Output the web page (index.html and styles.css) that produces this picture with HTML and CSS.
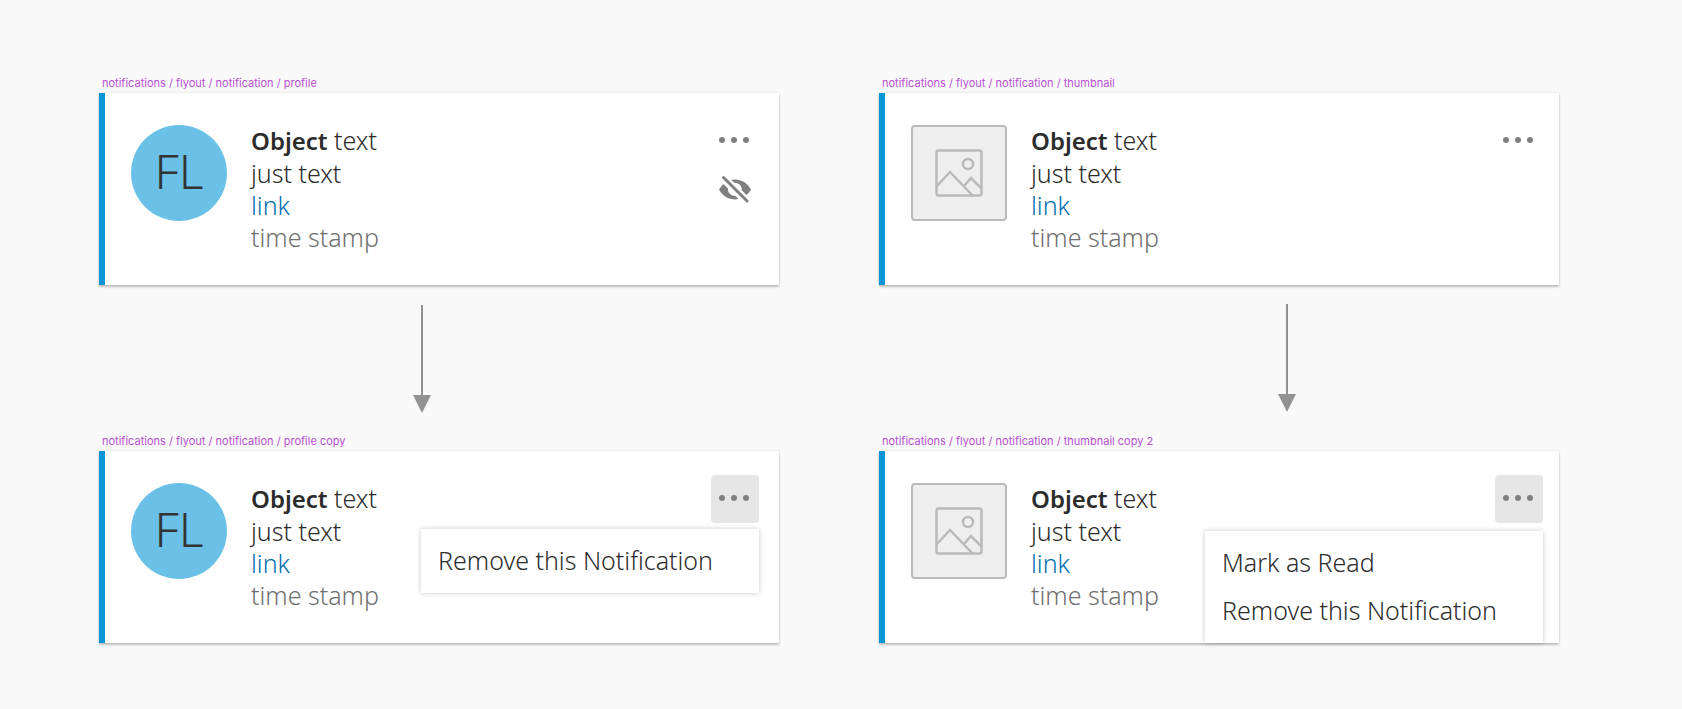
FILE: index.html
```html
<!DOCTYPE html>
<html lang="en">
<head>
<meta charset="utf-8">
<meta name="viewport" content="width=device-width, initial-scale=1">
<title>Notification flyout</title>
<link rel="stylesheet" href="styles.css">
</head>
<body>
<svg class="sprite" aria-hidden="true">
  <symbol id="more" viewBox="0 0 48 48">
    <circle cx="11" cy="23" r="3"/><circle cx="23" cy="23" r="3"/><circle cx="35" cy="23" r="3"/>
  </symbol>
  <symbol id="hidden" viewBox="0 0 48 48">
    <path d="M12.500 19C10.500 21 9 22.800 8 24.500C11.500 31 17.500 34.500 24 34.500L27.500 34L24.500 31C20 31 17 28 17 24.500V23.500Z"/>
    <path d="M20 15L24 14.500C30.500 14.500 36.500 18 40 24.500C38.800 26.700 37.500 28.300 35.500 30L30.800 25.300C31 20.500 28 18 24 18Z"/>
    <path d="M12.500 12.500L36 36" fill="none" stroke="currentColor" stroke-width="3"  stroke-linecap="round"/>
  </symbol>
  <symbol id="image" viewBox="0 0 48 48">
    <g fill="none" stroke="currentColor" stroke-width="2.500">
      <rect x="1.500" y="1.500" width="45" height="45" rx="2"/>
      <circle cx="33" cy="15" r="5"/>
      <path d="M1 38L15 23L38 47M29 37L36 29L47 40"/>
    </g>
  </symbol>
</svg>
<main class="board">
  <section class="flow">
    <p class="label">notifications / flyout / notification / profile</p>
    <article class="card">
      <div class="avatar">FL</div>
      <div class="body">
        <p><strong>Object</strong> text</p>
        <p>just text</p>
        <p><a href="#">link</a></p>
        <p class="time">time stamp</p>
      </div>
      <div class="actions">
        <button class="icon-button" aria-label="More options"><svg><use href="#more"/></svg></button>
        <button class="icon-button" aria-label="Hide"><svg><use href="#hidden"/></svg></button>
      </div>
    </article>
    <div class="connector connector-profile"><svg class="arrow" viewBox="0 0 18 108"><path d="M8 0h2v90h8L9 108L0 90h8z"/></svg></div>
    <p class="label">notifications / flyout / notification / profile copy</p>
    <article class="card">
      <div class="avatar">FL</div>
      <div class="body">
        <p><strong>Object</strong> text</p>
        <p>just text</p>
        <p><a href="#">link</a></p>
        <p class="time">time stamp</p>
      </div>
      <div class="actions">
        <button class="icon-button active" aria-label="More options" aria-expanded="true"><svg><use href="#more"/></svg></button>
        <div class="menu">
          <button class="menu-item">Remove this Notification</button>
        </div>
      </div>
    </article>
  </section>
  <section class="flow">
    <p class="label">notifications / flyout / notification / thumbnail</p>
    <article class="card card-thumbnail">
      <div class="thumbnail"><svg><use href="#image"/></svg></div>
      <div class="body">
        <p><strong>Object</strong> text</p>
        <p>just text</p>
        <p><a href="#">link</a></p>
        <p class="time">time stamp</p>
      </div>
      <div class="actions">
        <button class="icon-button" aria-label="More options"><svg><use href="#more"/></svg></button>
      </div>
    </article>
    <div class="connector connector-thumbnail"><svg class="arrow" viewBox="0 0 18 108"><path d="M8 0h2v90h8L9 108L0 90h8z"/></svg></div>
    <p class="label">notifications / flyout / notification / thumbnail copy 2</p>
    <article class="card card-thumbnail">
      <div class="thumbnail"><svg><use href="#image"/></svg></div>
      <div class="body">
        <p><strong>Object</strong> text</p>
        <p>just text</p>
        <p><a href="#">link</a></p>
        <p class="time">time stamp</p>
      </div>
      <div class="actions">
        <button class="icon-button active" aria-label="More options" aria-expanded="true"><svg><use href="#more"/></svg></button>
        <div class="menu">
          <button class="menu-item">Mark as Read</button>
          <button class="menu-item">Remove this Notification</button>
        </div>
      </div>
    </article>
  </section>
</main>
</body>
</html>
```
FILE: styles.css
```css
* { box-sizing: border-box; }
body {
  margin: 0;
  background: #f9f9f9;
  color: #2c2c2c;
  font: 300 25px/32px "Noto Sans", "Open Sans", sans-serif;
}
p { margin: 0; }
button { border: 0; background: none; padding: 0; font: inherit; color: inherit; }
.sprite { position: absolute; width: 0; height: 0; }
.board {
  display: grid;
  grid-template-columns: 1fr 1fr;
  gap: 100px;
  padding: 73px 123px 64px 99px;
}
.label {
  padding: 2px 3px;
  color: #b750d2;
  font: 400 11px/16px Inter, sans-serif;
}
.card {
  display: flex;
  align-items: flex-start;
  gap: 24px;
  min-height: 192px;
  padding: 24px 20px 24px 26px;
  border-left: 6px solid #0a96d6;
  background: #fff;
  box-shadow: 0 2px 2px rgba(0, 0, 0, .22), 0 0 2px rgba(0, 0, 0, .12);
}
.card-thumbnail { padding-right: 16px; }
.avatar, .thumbnail {
  display: grid;
  place-items: center;
  flex: none;
  width: 96px;
  height: 96px;
  margin-top: 8px;
}
.avatar {
  padding-bottom: 4px;
  border-radius: 50%;
  background: #6ac0e7;
  color: #333;
  font-size: 48px;
  line-height: 64px;
}
.thumbnail {
  border: 2px solid #bababa;
  border-radius: 4px;
  background: #eee;
  color: #bababa;
}
.thumbnail svg { width: 48px; height: 48px; }
.body { flex: 1; padding-top: 7px; }
.body strong { font-size: 24px; font-weight: 600; }
.body a { color: #006eaf; text-decoration: none; }
.body .time { color: #6f6f6f; }
.actions { position: relative; display: flex; flex-direction: column; }
.icon-button { width: 48px; height: 48px; border-radius: 4px; color: #808080; }
.icon-button svg { display: block; width: 48px; height: 48px; fill: currentColor; }
.icon-button.active { background: #e6e6e6; }
.menu {
  position: absolute;
  top: calc(100% + 6px);
  right: 0;
  display: flex;
  flex-direction: column;
  width: 338px;
  padding: 7px 0 9px;
  background: #fff;
  box-shadow: 0 0 5px rgba(0, 0, 0, .22);
}
.card-thumbnail .menu { top: calc(100% + 8px); }
.menu-item { height: 48px; padding: 0 17px; text-align: left; }
.connector { padding: 20px 0 18px 46%; }
.connector-profile { padding-left: calc(46% + 1px); }
.connector-thumbnail { padding: 19px 0 19px calc(59% - 2px); }
.arrow { display: block; width: 18px; height: 108px; fill: #929292; }
```
